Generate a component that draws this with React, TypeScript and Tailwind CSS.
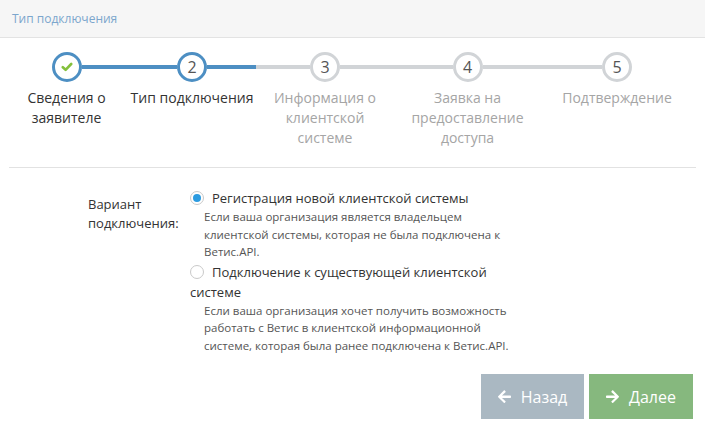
import React from "react";

const BLUE = "#4d8fc3";
const GRAY = "#d1d4d7";

type Step = { n: string; label: string; w: string; state: "done" | "active" | "todo" };

const steps: Step[] = [
  { n: "1", label: "Сведения о заявителе", w: "w-[123px]", state: "done" },
  { n: "2", label: "Тип подключения", w: "w-[128px]", state: "active" },
  { n: "3", label: "Информация о клиентской системе", w: "w-[138px]", state: "todo" },
  { n: "4", label: "Заявка на предоставление доступа", w: "w-[147px]", state: "todo" },
  { n: "5", label: "Подтверждение", w: "w-[152px]", state: "todo" },
];

function Check() {
  return (
    <svg width="12" height="10" viewBox="0 0 12 10">
      <path d="M1.8 5.2 L4.6 7.8 L10.2 2" fill="none" stroke="#84c03c" strokeWidth="2.6" strokeLinecap="round" strokeLinejoin="round" />
    </svg>
  );
}

function Arrow({ dir }: { dir: "left" | "right" }) {
  return (
    <svg width="13" height="13" viewBox="0 0 448 448" style={{ transform: dir === "right" ? "scaleX(-1)" : undefined }}>
      <path
        fill="#fff"
        d="M257 416 L234 439 c-10 10-25 10-34 0 L7 247 c-10-10-10-25 0-34 L200 20 c10-10 25-10 34 0 l23 23 c10 10 10 26 0 35 L137 192 h287 c13 0 24 11 24 24 v32 c0 13-11 24-24 24 H137 l120 114 c10 10 10 25 0 35 z"
      />
    </svg>
  );
}

export default function App() {
  return (
    <div className="w-[705px] h-[431px] bg-white overflow-hidden" style={{ fontFamily: '"Open Sans", "Noto Sans", sans-serif' }}>
      <div className="h-[38px] bg-[#f6f6f6] border-b border-[#e3e3e3] pl-[12px] flex items-center">
        <span className="text-[12px] text-[#7ca6cd]">Тип подключения</span>
      </div>

      <div className="flex pl-[5px] pt-[14px]">
        {steps.map((s, i) => {
          const leftColor = s.state === "todo" ? GRAY : BLUE;
          const rightColor = s.state === "todo" ? GRAY : BLUE;
          const border = s.state === "todo" ? GRAY : BLUE;
          return (
            <div key={s.n} className={`${s.w} flex flex-col items-center`}>
              <div className="w-full flex items-center">
                <div className="flex-1 h-[4px]" style={{ background: i === 0 ? "transparent" : leftColor }} />
                <div
                  className="w-[30px] h-[30px] rounded-full border-[3px] bg-white flex items-center justify-center text-[16px] text-[#555] leading-none"
                  style={{ borderColor: border }}
                >
                  {s.state === "done" ? <Check /> : s.n}
                </div>
                <div className="flex-1 h-[4px]" style={{ background: i === steps.length - 1 ? "transparent" : rightColor }} />
              </div>
              <div
                className={`mt-[6px] px-[2px] text-center text-[14px] leading-[20px] ${s.state === "todo" ? "text-[#a5a5a5]" : "text-[#333]"}`}
              >
                {s.label}
              </div>
            </div>
          );
        })}
      </div>

      <div className="mx-[9px] mt-[19px] border-t border-[#e2e2e2]" />

      <div className="flex mt-[20px] pl-[88px]">
        <div className="w-[102px] pt-[7px] text-[13px] leading-[19px] text-[#333]">Вариант подключения:</div>
        <div className="w-[330px] text-[#333]">
          <div className="text-[13px] leading-[20px]">
            <span className="inline-block align-[-2px] w-[14px] h-[14px] rounded-full border border-[#c9c9c9] bg-white relative mr-[8px]">
              <span className="absolute left-[2px] top-[2px] w-[8px] h-[8px] rounded-full bg-[#2c9be0]" />
            </span>
            Регистрация новой клиентской системы
          </div>
          <div className="pl-[14px] text-[11.5px] leading-[17.5px] text-[#555]">
            Если ваша организация является владельцем клиентской системы, которая не была подключена к Ветис.API.
          </div>
          <div className="text-[13px] leading-[20px] mt-[1px]">
            <span className="inline-block align-[-2px] w-[14px] h-[14px] rounded-full border border-[#c9c9c9] bg-white mr-[8px]" />
            Подключение к существующей клиентской системе
          </div>
          <div className="pl-[14px] text-[11.5px] leading-[17.5px] text-[#555]">
            Если ваша организация хочет получить возможность работать с Ветис в клиентской информационной системе, которая была ранее подключена к Ветис.API.
          </div>
        </div>
      </div>

      <div className="flex justify-end pr-[12px] mt-[20px] gap-[5px]">
        <button className="w-[103px] h-[45px] bg-[#aab8c2] text-white text-[16px] flex items-center justify-center gap-[10px]">
          <Arrow dir="left" />
          <span>Назад</span>
        </button>
        <button className="w-[104px] h-[45px] bg-[#86b87e] text-white text-[16px] flex items-center justify-center gap-[10px]">
          <Arrow dir="right" />
          <span>Далее</span>
        </button>
      </div>
    </div>
  );
}
